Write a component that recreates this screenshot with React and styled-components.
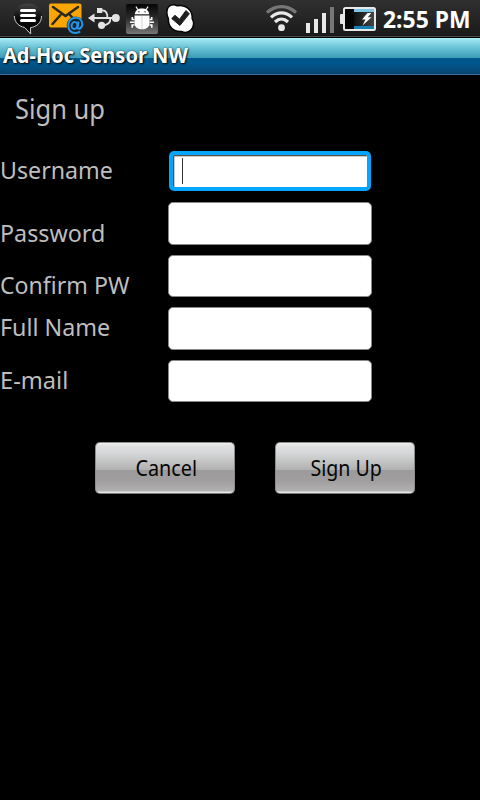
import React from "react";
import styled, { createGlobalStyle } from "styled-components";

const GlobalStyle = createGlobalStyle`
  html, body { margin: 0; padding: 0; background: #000; }
  * { box-sizing: border-box; }
`;

const Screen = styled.main`
  width: 480px;
  height: 800px;
  overflow: hidden;
  background: #000;
  font-family: "Noto Sans", "Open Sans", sans-serif;
`;

const StatusBar = styled.header`
  display: flex;
  justify-content: space-between;
  height: 38px;
  border-bottom: 1px solid #000;
  background: linear-gradient(#303030, #1b1b1b 35px, #161616 36px, #4a4a4a 36px);
`;

const IconGroup = styled.div`
  display: flex;
`;

const Icon = styled.svg`
  display: block;
  flex: none;
  width: ${(p) => p.$w}px;
  height: 36px;
`;

const Fitted = styled.span`
  display: inline-block;
  white-space: nowrap;
  transform: scaleX(${(p) => p.$fit || 1});
  transform-origin: ${(p) => p.$origin || "left"} center;
`;

const Clock = styled.time`
  width: 102px;
  padding: 2px 0 0 5px;
  color: #fff;
  font-size: 23.5px;
  font-weight: 700;
  line-height: 34px;
`;

const TitleBar = styled.div`
  height: 37px;
  padding-left: 3px;
  border-bottom: 1px solid #3d6f9c;
  background: linear-gradient(
    #b4f0fb 0px, #9ce2ef 2px, #6cc5d8 9px, #3a9cb7 20px,
    #01578a 20px, #00568c 26px, #0a4470 36px
  );
  color: #fff;
  font-size: 21px;
  font-weight: 700;
  line-height: 34px;
  text-shadow: 1px 1px 2px #000, 0 0 2px #00000088;
`;

const Heading = styled.h1`
  height: 75px;
  margin: 0;
  padding: 15px 0 0 15px;
  color: #bebebe;
  font-size: 28px;
  font-weight: 400;
  line-height: 36px;
`;

const Form = styled.form`
  display: grid;
  grid-template-rows: 52px 53px 52px 53px 52px;
`;

const Row = styled.div`
  display: grid;
  grid-template-columns: 168px 204px;
  align-items: start;
`;

const Label = styled.label`
  padding-top: ${(p) => p.$drop}px;
  color: #bebebe;
  font-size: 23.5px;
  line-height: 32px;
`;

const Field = styled.div`
  height: ${(p) => p.$h}px;
  border: 1px solid #888;
  border-radius: 5px;
  background: #fff;
`;

const FocusedField = styled.div`
  height: 40px;
  margin: 1px 1px 0;
  padding: 3px 0 0 8px;
  border: 4px solid #05a4fd;
  border-radius: 5px;
  background: #fff;
  box-shadow: inset 1px 1px 0 #56504c, inset 2px 2px 0 #c9c9c9;
`;

const Caret = styled.div`
  width: 1px;
  height: 26px;
  margin-left: 1px;
  background: #333;
`;

const Actions = styled.div`
  display: flex;
  gap: 40px;
  padding: 30px 0 0 95px;
`;

const Button = styled.button`
  width: 140px;
  height: 52px;
  padding: 0 0 3px 2px;
  border: 1px solid #d9d9d9;
  border-color: #8d8d8d #8d8d8d #777;
  border-radius: 5px;
  background: linear-gradient(#efefef 0, #dfe0e1 3px, #d6d7d8 10px, #b0b0b0 27px, #9c9a9b 27px, #a09e9f 38px, #b2b0b1 48px, #e6e6e6 49px);
  color: #050505;
  font-family: inherit;
  font-size: 22px;
  line-height: 30px;
`;

const MessageIcon = () => (
  <Icon $w={34} viewBox="12 0 34 36">
    <defs>
      <linearGradient id="msg" x2="0" y2="1">
        <stop offset="0" stopColor="#444" /><stop offset=".5" stopColor="#080808" /><stop offset="1" stopColor="#000" />
      </linearGradient>
    </defs>
    <path d="M28 3.5c-8 0-13.7 4.6-13.7 12 0 6.7 4.5 10.7 10.4 12l6 6.700-.3-6.500C37 26.600 41.500 22.500 41.500 15.700 41.500 8.200 36 3.500 28 3.500z" fill="url(#msg)" />
    <path d="M14.300 16c.3 6.700 4.700 10.400 10.400 11.500l6 6.500-.3-6.300C37 26.600 41.500 22.700 41.500 16" fill="none" stroke="#ccc" strokeWidth="1" />
    <path d="M21.500 10.500h13M21.500 15.500h13M21.500 20.500h13" stroke="#fff" strokeWidth="3" strokeLinecap="round" />
  </Icon>
);

const MailIcon = () => (
  <Icon $w={41} viewBox="46 0 41 36">
    <rect x="49" y="3.500" width="32.500" height="24" rx="2" fill="#f9a602" />
    <path d="M53 7l12.500 9L78 7M52.500 24l8-9M78 24l-8-9" fill="none" stroke="#29271f" strokeWidth="2.500" strokeLinecap="round" strokeLinejoin="round" />
    <circle cx="75.500" cy="25.300" r="8.800" fill="#16222a" />
    <g fill="none" stroke="#2496e8" strokeWidth="2">
      <ellipse cx="74.500" cy="25.500" rx="2.900" ry="3.500" transform="rotate(15 74.500 25.500)" />
      <path d="M78.500 21.500l-1 6c0 2.500 4.800 1.200 4.800-3.200 0-4-2.800-6.600-6.800-6.600-4.400 0-7.300 3.500-7.300 7.900 0 4.500 3 7.300 7.200 7.300 2 0 3.600-.5 4.800-1.200" />
    </g>
  </Icon>
);

const UsbIcon = () => (
  <Icon $w={37} viewBox="87 0 37 36">
    <g fill="none" stroke="#e3e3e3" strokeWidth="1.800">
      <path d="M93 18h22M101 10.400h1.500c3.500 0 5 3.300 5 7.600M102 25.300c5.500 0 8.500-2.500 8.500-7.300" />
    </g>
    <path d="M88 18l6.500-4.500v9z" fill="#e3e3e3" />
    <circle cx="115.800" cy="18" r="4" fill="#e3e3e3" />
    <circle cx="101.600" cy="25.300" r="3.600" fill="#e3e3e3" />
    <rect x="97" y="8" width="5.300" height="5" fill="#e3e3e3" />
  </Icon>
);

const DebugIcon = () => (
  <Icon $w={40} viewBox="124 0 40 36">
    <defs>
      <linearGradient id="debug" x2="0" y2="1">
        <stop offset="0" stopColor="#050505" /><stop offset=".45" stopColor="#292929" /><stop offset="1" stopColor="#777" />
      </linearGradient>
    </defs>
    <rect x="126" y="4" width="32" height="30" rx="2" fill="url(#debug)" />
    <path d="M137.800 9.500l-1.600-2.500M146.200 9.500l1.600-2.500" stroke="#fff" strokeWidth="1.200" strokeLinecap="round" />
    <path d="M134.800 14.300c.3-3.800 3.200-5.800 7.200-5.800s6.900 2 7.200 5.800z" fill="#fff" />
    <path d="M134.500 15.600h15v7.400c0 4-3 6.300-7.500 6.300s-7.500-2.300-7.500-6.300z" fill="#fff" />
    <path d="M134.500 19.500h-2.200v-2.500M134.500 22.200h-4.500M134.500 25h-2.300v2.800M149.500 19.500h2.200v-2.500M149.500 22.200h4.500M149.500 25h2.300v2.800" fill="none" stroke="#fff" strokeWidth="1.600" />
    <path d="M142 16v13" stroke="#bbb" strokeWidth=".7" />
    <circle cx="138.900" cy="11.800" r=".8" fill="#444" /><circle cx="145.100" cy="11.800" r=".8" fill="#444" />
  </Icon>
);

const CheckIcon = () => (
  <Icon $w={34} viewBox="164 0 34 36">
    <path d="M169 6.300c3-2 6-1.600 8.300-.5 8-1.800 15.500 4 14.800 12.700 2.200 4 1.700 8.600-1.200 11.600-3 3-6.500 2.700-9.500 1.400-8 .7-13.500-5-13-12.700-2-4-2.400-9.500.6-12.500z" fill="#fff" stroke="#050505" strokeWidth="1.500" />
    <path d="M171.700 18.500l3.300-3.200 4.500 4 6.500-8.800 3.300 3.300-9.400 11.700z" fill="#202020" stroke="#202020" strokeLinejoin="round" />
  </Icon>
);

const WifiIcon = () => (
  <Icon $w={36} viewBox="264 0 36 36">
    <g fill="none" strokeWidth="3.200">
      <path d="M267 12.700c8.500-8 20.500-8 29 0" stroke="#777" />
      <path d="M271 17.400c6.500-6 14.500-6 21 0" stroke="#e8e8e8" />
      <path d="M275 22c4-3.800 9-3.800 13 0" stroke="#e8e8e8" />
    </g>
    <circle cx="281.500" cy="27.700" r="3.400" fill="#e8e8e8" />
  </Icon>
);

const SignalIcon = () => (
  <Icon $w={38} viewBox="300 0 38 36">
    <path d="M306 23h4v10h-4zM314 19h4v14h-4zM322 13h4v20h-4z" fill="#e8e8e8" />
    <path d="M330 7h4v26h-4z" fill="#777" />
  </Icon>
);

const BatteryIcon = () => (
  <Icon $w={40} viewBox="338 0 40 36">
    <defs>
      <linearGradient id="cell"><stop offset="0" stopColor="#101010" /><stop offset="1" stopColor="#454545" /></linearGradient>
    </defs>
    <rect x="340" y="14" width="5" height="10" rx="1" fill="#e8e8e8" />
    <rect x="344" y="8" width="31" height="22" rx="1.500" fill="#050505" stroke="#e8e8e8" strokeWidth="2" />
    <path d="M354 9h20v3h-20z" fill="#7cc3e8" /><path d="M354 26h20v3h-20z" fill="#1580b4" />
    <rect x="354" y="12" width="20" height="14" fill="url(#cell)" />
    <path d="M367.500 13l-5.500 6.500h3.500l-3 6 9-8.200h-3.700l3.500-4.300z" fill="#fff" />
  </Icon>
);

const ROWS = [
  { label: "Username", fit: 0.987, drop: 4, focused: true },
  { label: "Password", fit: 0.99, drop: 15, h: 43 },
  { label: "Confirm PW", fit: 0.983, drop: 14, h: 42 },
  { label: "Full Name", fit: 0.99, drop: 4, h: 43 },
  { label: "E-mail", fit: 1.005, drop: 4, h: 42 },
];

export default function App() {
  return (
    <Screen>
      <GlobalStyle />
      <StatusBar>
        <IconGroup>
          <Icon $w={12} />
          <MessageIcon />
          <MailIcon />
          <UsbIcon />
          <DebugIcon />
          <CheckIcon />
        </IconGroup>
        <IconGroup>
          <WifiIcon />
          <SignalIcon />
          <BatteryIcon />
          <Clock><Fitted $fit={0.975}>2:55 PM</Fitted></Clock>
        </IconGroup>
      </StatusBar>
      <TitleBar><Fitted $fit={0.954}>Ad-Hoc Sensor NW</Fitted></TitleBar>
      <Heading><Fitted $fit={0.91}>Sign up</Fitted></Heading>
      <Form>
        {ROWS.map((r) => (
          <Row key={r.label}>
            <Label $drop={r.drop}><Fitted $fit={r.fit}>{r.label}</Fitted></Label>
            {r.focused ? <FocusedField><Caret /></FocusedField> : <Field $h={r.h} />}
          </Row>
        ))}
      </Form>
      <Actions>
        <Button><Fitted $fit={0.9} $origin="center">Cancel</Fitted></Button>
        <Button><Fitted $fit={0.89} $origin="center">Sign Up</Fitted></Button>
      </Actions>
    </Screen>
  );
}
